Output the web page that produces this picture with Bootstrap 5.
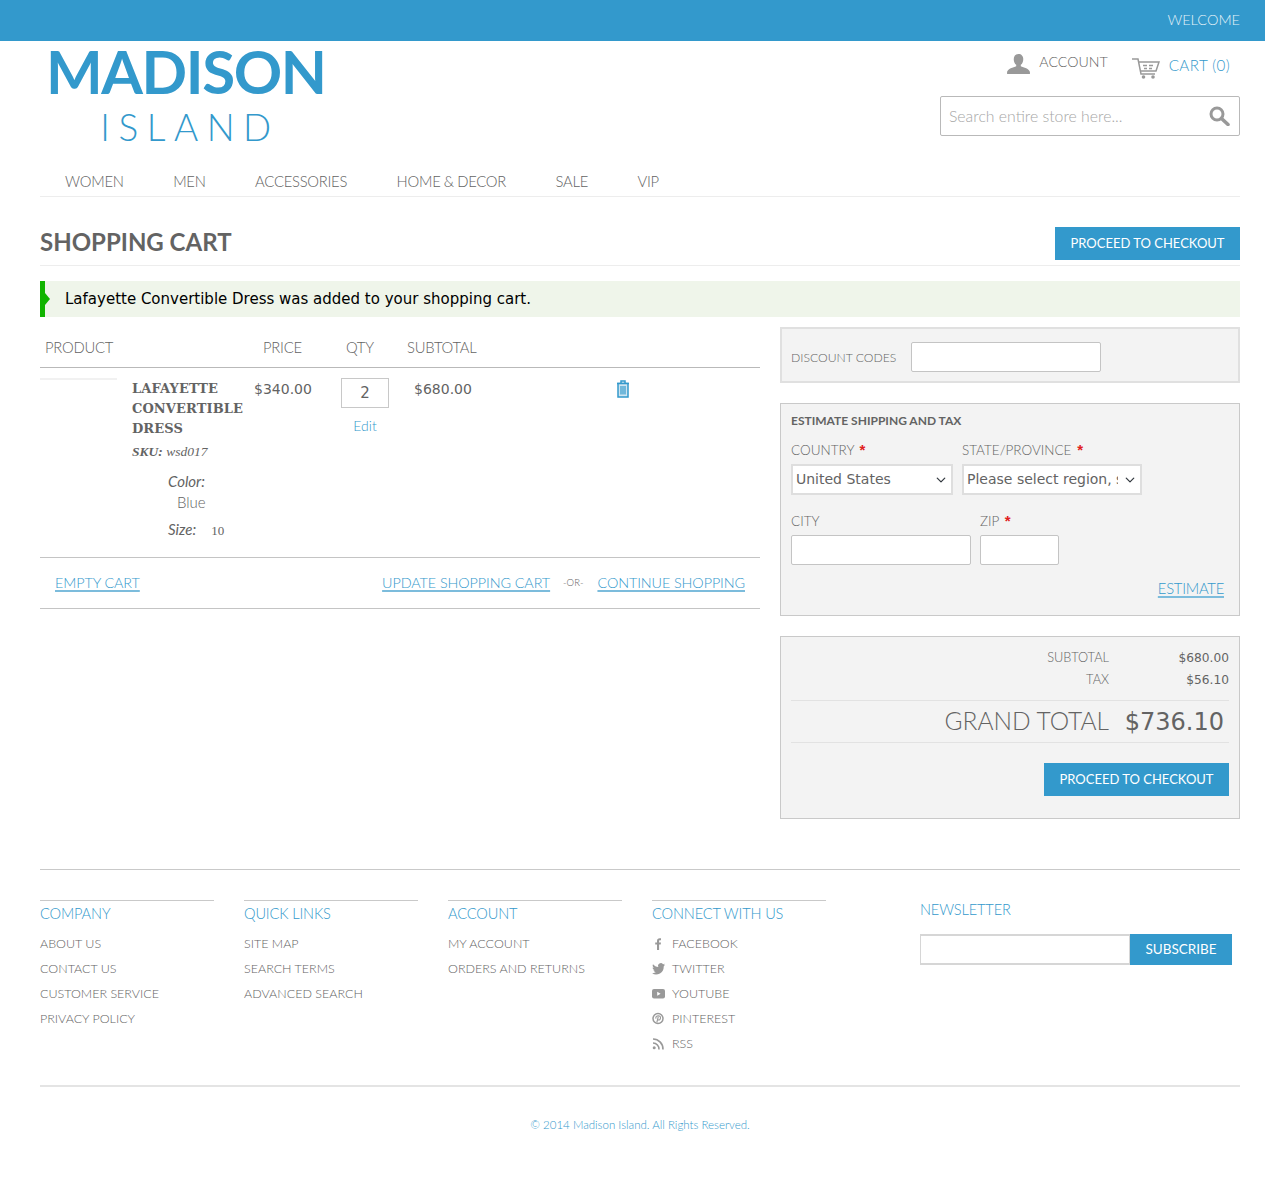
<!DOCTYPE html>
<html lang="en">
<head>
  <meta charset="UTF-8">
  <title>Shopping Cart</title>
  <link href="https://cdn.jsdelivr.net/npm/bootstrap@5.3.2/dist/css/bootstrap.min.css" rel="stylesheet">
  <style>
    body {
      font-family: Lato, "Liberation Sans", sans-serif;
      font-weight: 400;
      color: #636363;
      font-size: 14px;
      min-height: 1193px;
    }
    a { color: #3399cc; }

    .topbar {
      height: 41px;
      background: #3399cc;
      color: #e3f1f8;
      font-size: 14.5px;
      line-height: 40px;
      padding-right: 25px;
      text-align: right;
      font-weight: 300;
    }
    .page-wrap { width: 1200px; margin-left: 40px; }

    .site-head { height: 116px; }
    .logo-box { width: 300px; padding-left: 6px; margin-top: -2px; color: #3399cc; text-align: center; }
    .logo-main { font-size: 60px; font-weight: 700; line-height: 64px; width: 276px; letter-spacing: -1.4px; white-space: nowrap; }
    .logo-sub { font-size: 37px; font-weight: 300; line-height: 40px; width: 276px; letter-spacing: 8.5px; margin-top: 4px; padding-left: 12px; }
    .head-right { width: 300px; }
    .acct-link { font-size: 14.2px; color: #636363; font-weight: 300; line-height: 20px; margin-left: 1px; margin-top: 11px; }
    .cart-link { font-size: 15.2px; color: #3399cc; font-weight: 300; line-height: 20px; letter-spacing: .4px; margin-top: 14px; margin-right: 10px; }
    .person-ico { margin: 13px 8px 0 0; }
    .cart-ico { margin: 17px 9px 0 24px; }
    .search-wrap { height: 40px; border: 1px solid #b9b9b9; border-radius: 2px; padding: 0 9px 0 8px; margin-top: 15px; }
    .search-text { font-size: 15.8px; color: #a6a6a6; border: 0; outline: 0; width: 240px; background: none; padding: 0; font-weight: 300; }
    .search-text::placeholder { color: #a6a6a6; opacity: 1; }

    .main-nav { height: 40px; border-bottom: 1px solid #ededed; padding-left: 25px; gap: 49.500px; }
    .main-nav a { color: #636363; text-decoration: none; font-size: 14.8px; letter-spacing: -.25px; word-spacing: -.5px; font-weight: 300; line-height: 49px; }

    .title-row { height: 69px; border-bottom: 1px solid #ededed; padding-top: 30px; }
    .title-row h1 { font-size: 24px; font-weight: 700; color: #636363; margin: 0; line-height: 29px; }
    .go-btn {
      background: #3399cc;
      color: #fff;
      border: 0;
      border-radius: 0;
      font-size: 13px;
      height: 33px;
      padding: 0;
      width: 185px;
      font-weight: 400;
    }
    .go-btn:hover { background: #2e8ab8; color: #fff; }

    .added-msg {
      margin-top: 15px;
      height: 36px;
      background: #eff5ea;
      border-left: 5px solid #11b400;
      padding-left: 20px;
      font-family: "DejaVu Sans", sans-serif;
      font-size: 15px;
      line-height: 37px;
      color: #000;
      position: relative;
    }
    .added-msg::before {
      content: "";
      position: absolute;
      left: 0;
      top: 12px;
      border-left: 5px solid #11b400;
      border-top: 6px solid transparent;
      border-bottom: 6px solid transparent;
    }

    .main-cols { margin-top: 10px; gap: 20px; }
    .left-col { width: 720px; }
    .right-col { width: 460px; }

    .cart-tbl { width: 720px; table-layout: fixed; border-collapse: collapse; }
    .cart-tbl th { font-weight: 300; font-size: 14.8px; letter-spacing: -.25px; height: 40px; border-bottom: 1px solid #b9b9b9; padding: 0; vertical-align: middle; }
    .cart-tbl td { vertical-align: top; padding: 0; font-family: "DejaVu Sans", sans-serif; font-size: 14px; height: 190px; }
    .prod-head { padding-left: 5px !important; }
    .thumb-line { width: 77px; height: 2px; background: #f1f1f1; margin-top: 10px; }
    .item-name { font-family: "DejaVu Serif", serif; font-weight: 700; font-size: 13px; line-height: 20px; margin: 11px 0 0 5px; white-space: nowrap; letter-spacing: .1px; }
    .item-sku { font-family: "Liberation Serif", serif; font-style: italic; font-size: 13.500px; margin: 3px 0 0 5px; line-height: 20px; }
    .opt-list { font-family: Lato, sans-serif; font-size: 15px; line-height: 20px; margin: 9px 0 0 41px; }
    .opt-list i { font-weight: 400; }
    .opt-val { display: block; margin: 1px 0 7px 9px; font-weight: 300; }
    .opt-sm { font-size: 13px; margin-left: 15px; font-family: "Liberation Serif", serif; }
    .price-txt { margin-top: 11px; line-height: 20px; }
    .qty-box { width: 48px; height: 30px; border: 1px solid #c8c8c8; text-align: center; font-size: 15px; padding: 0; margin: 10px 0 0 16px; color: #636363; font-family: "DejaVu Sans", sans-serif; display: block; }
    .edit-lnk { font-family: Lato, sans-serif; font-size: 14px; text-decoration: none; display: block; width: 48px; margin: 7px 0 0 16px; text-align: center; font-weight: 300; }
    .trash-ico { margin-top: 12px; }

    .cart-acts { height: 52px; border-top: 1px solid #c4c4c4; border-bottom: 1px solid #c4c4c4; padding: 0 15px; font-size: 14.4px; letter-spacing: -.1px; font-weight: 300; }
    .cart-acts a { text-decoration-color: #7cbcdc; text-decoration-thickness: 2px; text-underline-offset: 2px; }
    .or-txt { font-size: 9.5px; margin: 0 14px 0 13px; letter-spacing: 0; }

    .grey-box { background: #f3f3f3; border: 1px solid #c9c9c9; }
    .code-box { height: 56px; padding: 0 9px; border-width: 2px; border-color: #e0e0e0; margin-bottom: 20px; }
    .box-lbl { font-size: 13.5px; font-weight: 300; color: #636363; }
    .code-lbl { font-size: 12.2px; margin: 7px 15px 0 0; white-space: nowrap; }
    .code-in { width: 190px; margin-top: 4px; }
    .text-in { background: #fff; border: 1px solid #c4c4c4; border-radius: 2px; height: 30px; padding: 0; outline: 0; display: block; }
    .ship-box { height: 213px; padding: 8px 10px 0; margin-bottom: 20px; }
    .ship-box h2 { font-size: 12px; font-weight: 700; line-height: 18px; margin: 0 0 11px; color: #636363; }
    .req { color: #e02020; font-family: "Liberation Sans", sans-serif; font-weight: 700; font-size: 15px; line-height: 0; margin-left: 2px; }
    .ship-lbl { line-height: 18px; margin-bottom: 5px; }
    .form-select.pick-in {
      font-family: "DejaVu Sans", sans-serif;
      font-size: 14px;
      height: 31px;
      border: 2px solid #dedede;
      border-radius: 0;
      padding: 0 22px 0 3px;
      color: #636363;
      background-color: #fff;
      background-position: right 4px center;
      background-size: 12px 10px;
    }
    .est-lnk { font-size: 14.8px; letter-spacing: -.25px; font-weight: 300; text-decoration-thickness: 2px; text-decoration-color: #7cbcdc; text-underline-offset: 2px; }

    .sum-box { height: 183px; padding: 10px 10px 0; }
    .sum-row { height: 22px; font-size: 12.8px; font-weight: 300; align-items: center; }
    .sum-lbl { flex: 1; text-align: right; }
    .sum-amt { width: 120px; text-align: right; font-family: "DejaVu Sans", sans-serif; font-size: 12.2px; font-weight: 400; }
    .grand-row { border-top: 1px solid #e2e2e2; border-bottom: 1px solid #e2e2e2; height: 43px; margin-top: 9px; }
    .grand-lbl { flex: 1; text-align: right; font-size: 24.5px; font-weight: 300; line-height: 40px; }
    .grand-amt { width: 115px; text-align: right; padding-right: 5px; font-family: "DejaVu Sans", sans-serif; font-size: 24px; line-height: 43px; font-weight: 400; margin-left: 5px; white-space: nowrap; }

    .site-foot { margin-top: 50px; border-top: 1px solid #c9c9c9; padding-top: 30px; }
    .foot-row { height: 169px; }
    .foot-col { width: 174px; margin-right: 30px; border-top: 1px solid #c9c9c9; }
    .foot-col h3, .news-col h3 { font-size: 14.6px; letter-spacing: -.15px; font-weight: 300; color: #3399cc; margin: 0; line-height: 26px; white-space: nowrap; }
    .foot-list { margin: 4px 0 0; padding: 0; list-style: none; }
    .foot-list li { height: 25px; line-height: 25px; font-size: 12.5px; font-weight: 300; display: flex; align-items: center; white-space: nowrap; }
    .foot-list a { color: #636363; text-decoration: none; }
    .soc-icon { width: 13px; height: 13px; margin-right: 7px; flex: none; }
    .news-col { margin-left: 64px; width: 312px; }
    .news-col h3 { line-height: 20px; }
    .news-form { margin-top: 14px; height: 31px; }
    .news-in { flex: 1; height: 31px; border: 1px solid #d6d6d6; border-top-width: 2px; border-bottom-width: 2px; background: #fff; outline: 0; padding: 0; min-width: 0; }
    .news-btn { width: 102px; height: 31px; background: #3399cc; color: #fff; border: 0; border-radius: 0; padding: 0; font-size: 13.5px; }
    .news-btn:hover { background: #2e8ab8; color: #fff; }
    .copy-wrap { margin-top: 16px; border-top: 2px solid #e4e4e4; padding-top: 29px; text-align: center; font-size: 11.5px; color: #3399cc; font-weight: 300; }
  </style>
</head>
<body>

  <div class="topbar">WELCOME</div>

  <div class="page-wrap">
    <header class="site-head d-flex justify-content-between">
      <div class="logo-box">
        <div class="logo-main">MADISON</div>
        <div class="logo-sub">ISLAND</div>
      </div>
      <div class="head-right">
        <div class="d-flex justify-content-end align-items-start" style="height:40px">
          <svg class="person-ico" width="23" height="20" viewBox="0 0 24 21" fill="#999"><path d="M12 0c3 0 5 2.200 5 5.400 0 2.600-1 4.800-2.600 6v1.400c3 1.200 9.100 2.600 9.600 6.200v2H0v-2c.5-3.600 6.600-5 9.600-6.200v-1.400C8 10.200 7 8 7 5.400 7 2.200 9 0 12 0z"/></svg>
          <a href="#" class="acct-link text-decoration-none">ACCOUNT</a>
          <svg class="cart-ico" width="28" height="21" viewBox="0 0 28 21" fill="none" stroke="#999"><path d="M0 1h6l3 15h14" stroke-width="1.500"/><path d="M6 4h21l-3 9H9" stroke-width="1.500"/><path d="M11 7.500h4M17 7.500h4M12 10.500h3M17 10.500h3" stroke-width="1.300"/><circle cx="11.500" cy="19" r="1.800" fill="#999" stroke="none"/><circle cx="21" cy="19" r="1.800" fill="#999" stroke="none"/></svg>
          <a href="#" class="cart-link text-decoration-none">CART (0)</a>
        </div>
        <div class="search-wrap d-flex align-items-center justify-content-between">
          <input class="search-text" type="text" placeholder="Search entire store here...">
          <svg width="21" height="20" viewBox="0 0 21 20" fill="none" stroke="#999"><circle cx="8" cy="8" r="6" stroke-width="3"/><path d="M12.500 12.500l6.500 6" stroke-width="3.600" stroke-linecap="round"/></svg>
        </div>
      </div>
    </header>

    <nav class="main-nav d-flex">
      <a href="#">WOMEN</a>
      <a href="#">MEN</a>
      <a href="#">ACCESSORIES</a>
      <a href="#">HOME &amp; DECOR</a>
      <a href="#">SALE</a>
      <a href="#">VIP</a>
    </nav>

    <div class="title-row d-flex justify-content-between align-items-start">
      <h1>SHOPPING CART</h1>
      <button class="btn go-btn">PROCEED TO CHECKOUT</button>
    </div>

    <div class="added-msg">Lafayette Convertible Dress was added to your shopping cart.</div>

    <div class="main-cols d-flex align-items-start">
      <div class="left-col">
        <table class="cart-tbl">
          <colgroup>
            <col style="width:87px"><col style="width:123px"><col style="width:75px"><col style="width:75px"><col style="width:85px"><col>
          </colgroup>
          <thead>
            <tr>
              <th colspan="2" class="prod-head">PRODUCT</th>
              <th style="padding-left:13px">PRICE</th>
              <th style="padding-left:21px">QTY</th>
              <th style="padding-left:7px">SUBTOTAL</th>
              <th></th>
            </tr>
          </thead>
          <tbody>
            <tr>
              <td><div class="thumb-line"></div></td>
              <td>
                <div class="item-name">LAFAYETTE<br>CONVERTIBLE<br>DRESS</div>
                <div class="item-sku"><b>SKU:</b> wsd017</div>
                <div class="opt-list">
                  <i>Color:</i>
                  <span class="opt-val">Blue</span>
                  <i>Size:</i><span class="opt-sm">10</span>
                </div>
              </td>
              <td style="padding-left:4px"><div class="price-txt">$340.00</div></td>
              <td>
                <input class="qty-box" type="text" value="2">
                <a href="#" class="edit-lnk">Edit</a>
              </td>
              <td style="padding-left:14px"><div class="price-txt">$680.00</div></td>
              <td style="padding-left:131px">
                <svg class="trash-ico" width="14" height="18" viewBox="0 0 14 18" fill="none" stroke="#3399cc"><path d="M1 3.500h12M5 3.500V1h4v2.500" stroke-width="1.500"/><path d="M2 3.500h10V17H2z" fill="#cfe5f1" stroke-width="1.500"/><path d="M5 6v8.500M7 6v8.500M9 6v8.500" stroke-width="1.200"/></svg>
              </td>
            </tr>
          </tbody>
        </table>
        <div class="cart-acts d-flex align-items-center justify-content-between">
          <a href="#">EMPTY CART</a>
          <div class="d-flex align-items-center">
            <a href="#">UPDATE SHOPPING CART</a>
            <span class="or-txt">-OR-</span>
            <a href="#">CONTINUE SHOPPING</a>
          </div>
        </div>
      </div>

      <div class="right-col">
        <div class="grey-box code-box d-flex align-items-center">
          <span class="box-lbl code-lbl">DISCOUNT CODES</span>
          <input class="text-in code-in" type="text">
        </div>

        <div class="grey-box ship-box">
          <h2>ESTIMATE SHIPPING AND TAX</h2>
          <div class="d-flex" style="gap:9px">
            <div style="width:162px">
              <div class="box-lbl ship-lbl">COUNTRY <span class="req">*</span></div>
              <select class="form-select pick-in"><option>United States</option></select>
            </div>
            <div style="width:180px">
              <div class="box-lbl ship-lbl">STATE/PROVINCE <span class="req">*</span></div>
              <select class="form-select pick-in"><option>Please select region, state or province</option></select>
            </div>
          </div>
          <div class="d-flex" style="gap:9px;margin-top:17px">
            <div style="width:180px">
              <div class="box-lbl ship-lbl">CITY</div>
              <input class="text-in w-100" type="text">
            </div>
            <div style="width:79px">
              <div class="box-lbl ship-lbl">ZIP <span class="req">*</span></div>
              <input class="text-in w-100" type="text">
            </div>
          </div>
          <div class="text-end" style="margin-top:12px;padding-right:5px"><a href="#" class="est-lnk">ESTIMATE</a></div>
        </div>

        <div class="grey-box sum-box">
          <div class="d-flex sum-row"><span class="sum-lbl">SUBTOTAL</span><span class="sum-amt">$680.00</span></div>
          <div class="d-flex sum-row"><span class="sum-lbl">TAX</span><span class="sum-amt">$56.10</span></div>
          <div class="d-flex grand-row"><span class="grand-lbl">GRAND TOTAL</span><span class="grand-amt">$736.10</span></div>
          <div class="text-end" style="margin-top:20px"><button class="btn go-btn">PROCEED TO CHECKOUT</button></div>
        </div>
      </div>
    </div>

    <footer class="site-foot">
      <div class="foot-row d-flex align-items-start">
        <div class="foot-col">
          <h3>COMPANY</h3>
          <ul class="foot-list">
            <li><a href="#">ABOUT US</a></li>
            <li><a href="#">CONTACT US</a></li>
            <li><a href="#">CUSTOMER SERVICE</a></li>
            <li><a href="#">PRIVACY POLICY</a></li>
          </ul>
        </div>
        <div class="foot-col">
          <h3>QUICK LINKS</h3>
          <ul class="foot-list">
            <li><a href="#">SITE MAP</a></li>
            <li><a href="#">SEARCH TERMS</a></li>
            <li><a href="#">ADVANCED SEARCH</a></li>
          </ul>
        </div>
        <div class="foot-col">
          <h3>ACCOUNT</h3>
          <ul class="foot-list">
            <li><a href="#">MY ACCOUNT</a></li>
            <li><a href="#">ORDERS AND RETURNS</a></li>
          </ul>
        </div>
        <div class="foot-col">
          <h3>CONNECT WITH US</h3>
          <ul class="foot-list">
            <li><svg class="soc-icon" viewBox="0 0 13 13" fill="#999"><path d="M5 13V7.500H3.200V5.400H5V4c0-1.800 1-2.800 2.700-2.800H9v2H8c-.7 0-.9.3-.9.9v1.300H9l-.3 2.100H7.100V13z"/></svg><a href="#">FACEBOOK</a></li>
            <li><svg class="soc-icon" viewBox="0 0 13 13" fill="#999"><path d="M13 2.600c-.5.200-1 .4-1.500.4.500-.3 1-.8 1.200-1.400-.5.300-1.100.5-1.700.6A2.700 2.700 0 0 0 6.400 5C4.200 4.900 2.300 3.800 1 2.200c-.7 1.200-.4 2.800.8 3.600-.4 0-.8-.1-1.200-.3 0 1.300.9 2.400 2.100 2.700-.4.100-.8.100-1.200 0 .3 1.100 1.300 1.800 2.500 1.900A5.400 5.400 0 0 1 0 11.200 7.600 7.600 0 0 0 11.700 4.400c.5-.4 1-.9 1.300-1.800z"/></svg><a href="#">TWITTER</a></li>
            <li><svg class="soc-icon" viewBox="0 0 13 13"><rect y="2" width="13" height="9.500" rx="2" fill="#999"/><path d="M5.200 4.700l3.400 2-3.400 2z" fill="#fff"/></svg><a href="#">YOUTUBE</a></li>
            <li><svg class="soc-icon" viewBox="0 0 13 13" fill="none" stroke="#999"><circle cx="6" cy="6.500" r="5" stroke-width="1.500"/><path d="M4.800 10.500L6.300 4.600M4 6.700C3.400 4.800 5 3.700 6.300 3.700c1.500 0 2.300 1 2.200 2.200-.1 1.400-1.100 2.400-2.300 2-.4-.1-.6-.4-.7-.7" stroke-width="1.100"/></svg><a href="#">PINTEREST</a></li>
            <li><svg class="soc-icon" viewBox="0 0 13 13" fill="none" stroke="#999"><circle cx="2.200" cy="10.800" r="1.500" fill="#999" stroke="none"/><path d="M1 6a6 6 0 0 1 6 6.500" stroke-width="1.600"/><path d="M1 2a10 10 0 0 1 10 10.500" stroke-width="1.600"/></svg><a href="#">RSS</a></li>
          </ul>
        </div>
        <div class="news-col">
          <h3>NEWSLETTER</h3>
          <div class="news-form d-flex">
            <input class="news-in" type="text">
            <button class="btn news-btn">SUBSCRIBE</button>
          </div>
        </div>
      </div>
      <div class="copy-wrap">© 2014 Madison Island. All Rights Reserved.</div>
    </footer>
  </div>

  <script src="https://cdn.jsdelivr.net/npm/bootstrap@5.3.2/dist/js/bootstrap.bundle.min.js"></script>
</body>
</html>
